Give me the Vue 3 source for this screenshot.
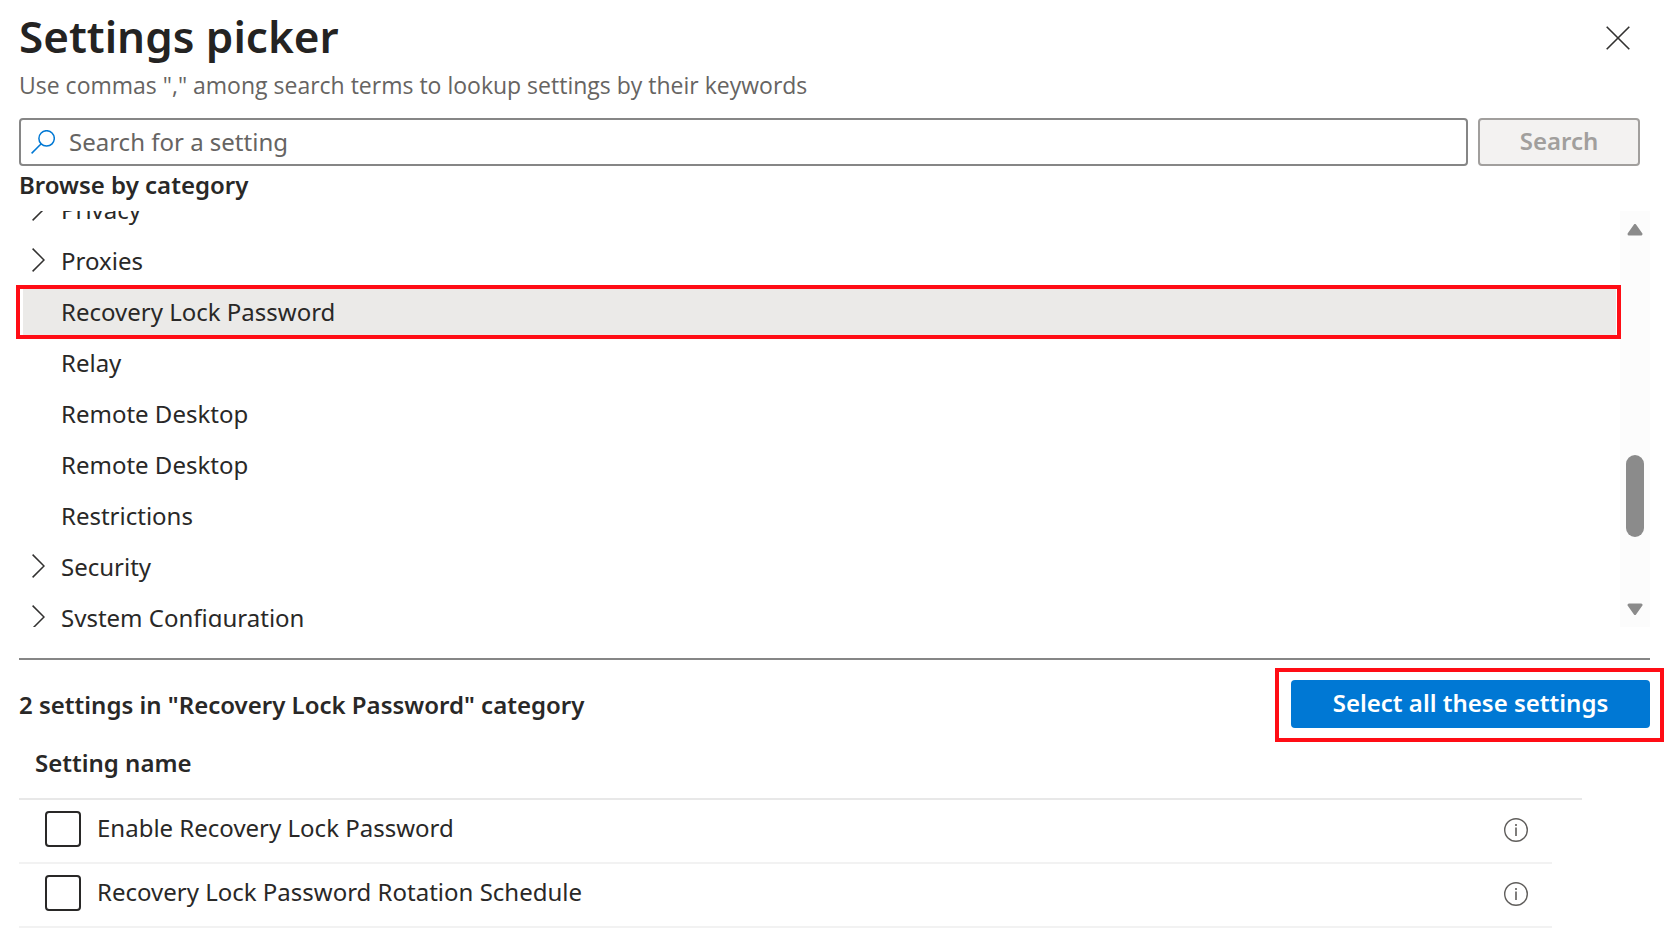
<script setup>
import { ref } from 'vue'

const query = ref('')
const selectedId = ref(3)
const categories = [
  { id: 1, name: 'Privacy', expandable: true },
  { id: 2, name: 'Proxies', expandable: true },
  { id: 3, name: 'Recovery Lock Password' },
  { id: 4, name: 'Relay' },
  { id: 5, name: 'Remote Desktop' },
  { id: 6, name: 'Remote Desktop' },
  { id: 7, name: 'Restrictions' },
  { id: 8, name: 'Security', expandable: true },
  { id: 9, name: 'System Configuration', expandable: true }
]
const settings = ref([
  { id: 'enable', name: 'Enable Recovery Lock Password', checked: false },
  { id: 'rotation', name: 'Recovery Lock Password Rotation Schedule', checked: false }
])

function selectAll() {
  settings.value.forEach((s) => { s.checked = true })
}
</script>

<template>
  <main class="panel">
    <header class="header">
      <h1 class="title">Settings picker</h1>
      <button class="close" type="button" aria-label="Close">
        <svg width="24" height="24" viewBox="0 0 24 24" aria-hidden="true">
          <path d="M0.7 0.7 L23.3 23.3 M23.3 0.7 L0.7 23.3" fill="none" stroke="#323130" stroke-width="1.6" />
        </svg>
      </button>
    </header>
    <p class="hint">Use commas "," among search terms to lookup settings by their keywords</p>

    <form class="search" role="search" @submit.prevent>
      <label class="search-box">
        <svg class="search-icon" width="24" height="24" viewBox="0 0 24 24" aria-hidden="true">
          <circle cx="15.6" cy="8.4" r="7.7" fill="none" stroke="#0078d4" stroke-width="1.5" />
          <path d="M10.2 13.8 L0.6 23.4" fill="none" stroke="#0078d4" stroke-width="1.5" />
        </svg>
        <input v-model="query" class="search-input" type="text" placeholder="Search for a setting" aria-label="Search for a setting">
      </label>
      <button class="search-button" type="submit" disabled>Search</button>
    </form>

    <h2 class="browse-title">Browse by category</h2>
    <div class="browse">
      <ul class="categories">
        <li v-for="c in categories" :key="c.id" class="category" :class="{ selected: c.id === selectedId }">
          <button class="category-button" type="button" @click="selectedId = c.id">
            <span class="chevron">
              <svg v-if="c.expandable" width="13" height="24" viewBox="0 0 13 24" aria-hidden="true">
                <path d="M0.6 0.6 L12 12 L0.6 23.4" fill="none" stroke="#323130" stroke-width="1.5" />
              </svg>
            </span>
            <span>{{ c.name }}</span>
          </button>
        </li>
      </ul>
      <div class="track" aria-hidden="true">
        <svg class="arrow" width="16" height="12" viewBox="0 0 16 12">
          <path d="M8 1.5 L14 10 H2 Z" fill="#8b8b8b" stroke="#8b8b8b" stroke-width="3" stroke-linejoin="round" />
        </svg>
        <div class="thumb"></div>
        <svg class="arrow" width="16" height="12" viewBox="0 0 16 12">
          <path d="M8 10.5 L14 2 H2 Z" fill="#8b8b8b" stroke="#8b8b8b" stroke-width="3" stroke-linejoin="round" />
        </svg>
      </div>
    </div>

    <section class="results">
      <div class="results-head">
        <h2 class="results-title">2 settings in "Recovery Lock Password" category</h2>
        <button class="select-all" type="button" @click="selectAll">Select all these settings</button>
      </div>
      <table class="table">
        <thead>
          <tr>
            <th scope="col">Setting name</th>
            <td class="info-col"></td>
            <td class="end-col"></td>
          </tr>
        </thead>
        <tbody>
          <tr v-for="s in settings" :key="s.id">
            <td>
              <label class="setting">
                <input v-model="s.checked" class="check" type="checkbox">
                <span class="setting-name">{{ s.name }}</span>
              </label>
            </td>
            <td class="info-col">
              <button class="info" type="button" :aria-label="'About ' + s.name">
                <svg width="24" height="24" viewBox="0 0 24 24" aria-hidden="true">
                  <circle cx="12" cy="12" r="11.3" fill="none" stroke="#605e5c" stroke-width="1.4" />
                  <path d="M12 9.5 V18 M12 6 V8" fill="none" stroke="#605e5c" stroke-width="1.6" />
                </svg>
              </button>
            </td>
            <td class="end-col"></td>
          </tr>
        </tbody>
      </table>
    </section>
  </main>
</template>

<style>
body {
  margin: 0;
  background: #fff;
}
</style>

<style scoped>
.panel {
  box-sizing: border-box;
  padding: 6px 26px 0 19px;
  font-family: "Noto Sans", "Open Sans", sans-serif;
  font-size: 24px;
  color: #292827;
}
.panel *,
.panel *::after {
  box-sizing: border-box;
}
h1, h2, p, ul {
  margin: 0;
  padding: 0;
}
button, input {
  font: inherit;
  color: inherit;
}
button {
  padding: 0;
  border: 0;
  background: none;
  cursor: pointer;
}
svg {
  display: block;
  flex: none;
}
.header {
  display: flex;
  justify-content: space-between;
  align-items: flex-start;
}
.title {
  font-size: 44px;
  line-height: 60px;
  font-weight: 600;
  color: #242322;
}
.close {
  display: flex;
  align-items: center;
  justify-content: center;
  width: 40px;
  height: 40px;
  margin: 12px 12px 0 0;
}
.hint {
  margin-top: 4px;
  font-family: "Open Sans", sans-serif;
  font-size: 23px;
  line-height: 30px;
  color: #666462;
}
.search {
  display: flex;
  gap: 10px;
  margin: 18px 10px 0 0;
}
.search-box {
  flex: 1;
  display: flex;
  align-items: center;
  gap: 14px;
  height: 48px;
  padding: 0 10px;
  border: 2px solid #868686;
  border-radius: 4px;
}
.search-input {
  flex: 1;
  min-width: 0;
  height: 44px;
  padding: 0 0 2px;
  border: 0;
  outline: 0;
  background: transparent;
}
.search-input::placeholder {
  color: #666462;
  opacity: 1;
}
.search-button {
  width: 162px;
  padding-bottom: 2px;
  border: 2px solid #a19f9d;
  border-radius: 4px;
  background: #f3f2f1;
  font-weight: 600;
  line-height: 42px;
  color: #a19f9d;
}
.browse-title {
  margin-top: 2px;
  font-size: 24px;
  line-height: 34px;
  font-weight: 600;
}
.browse {
  display: flex;
  height: 416px;
  margin: 9px 0 0 -3px;
  overflow: hidden;
}
.categories {
  flex: 1;
  margin-top: -24px;
  padding: 0 4px 0 7px;
  list-style: none;
}
.category {
  position: relative;
  margin-bottom: 5px;
}
.category.selected {
  background: #ebeae8;
}
.category.selected::after {
  content: "";
  position: absolute;
  z-index: 1;
  inset: -4px -5px -4px -7px;
  border: 4px solid #ff0d15;
  pointer-events: none;
}
.category-button {
  display: flex;
  align-items: center;
  width: 100%;
  padding-left: 9px;
  line-height: 46px;
  text-align: left;
}
.chevron {
  flex: none;
  width: 29px;
  padding-bottom: 2px;
}
.track {
  display: flex;
  flex-direction: column;
  align-items: center;
  width: 30px;
  padding: 13px 0 12px;
  background: #fcfcfc;
}
.arrow {
  flex: none;
}
.thumb {
  width: 18px;
  height: 82px;
  margin: 219px 0 auto;
  border-radius: 9px;
  background: #8b8b8b;
}
.results {
  margin-top: 31px;
  padding-top: 20px;
  border-top: 2px solid #868686;
}
.results-head {
  display: flex;
  align-items: center;
  justify-content: space-between;
}
.results-title {
  padding-top: 2px;
  font-size: 24px;
  line-height: 46px;
  font-weight: 600;
}
.select-all {
  position: relative;
  width: 359px;
  height: 48px;
  padding-bottom: 2px;
  border-radius: 4px;
  background: #0078d4;
  font-weight: 600;
  line-height: 46px;
  color: #fff;
}
.select-all::after {
  content: "";
  position: absolute;
  inset: -12px -14px -14px -16px;
  border: 4px solid #ff0d15;
  pointer-events: none;
}
.table {
  width: calc(100% - 68px);
  border-collapse: separate;
  border-spacing: 0;
}
th, td {
  padding: 0;
}
thead th,
thead td {
  border-bottom: 2px solid #e8e8e8;
}
th {
  padding: 12px 0 12px 16px;
  font-weight: 600;
  line-height: 46px;
  text-align: left;
}
tbody td {
  height: 64px;
  padding-bottom: 4px;
  border-bottom: 2px solid #f2f2f2;
}
.info-col {
  width: 72px;
}
tbody .info-col {
  padding-bottom: 2px;
}
.end-col {
  width: 30px;
}
tbody .end-col {
  border-bottom: 0;
}
.setting {
  display: flex;
  align-items: center;
  gap: 16px;
  padding-left: 26px;
}
.check {
  appearance: none;
  flex: none;
  width: 36px;
  height: 36px;
  margin: 0;
  border: 2px solid #292827;
  border-radius: 4px;
  background: #fff;
}
.check:checked {
  background: #0078d4;
}
.setting-name {
  padding-bottom: 2px;
  line-height: 34px;
}
.info {
  display: block;
  margin: 0 auto;
}
</style>
